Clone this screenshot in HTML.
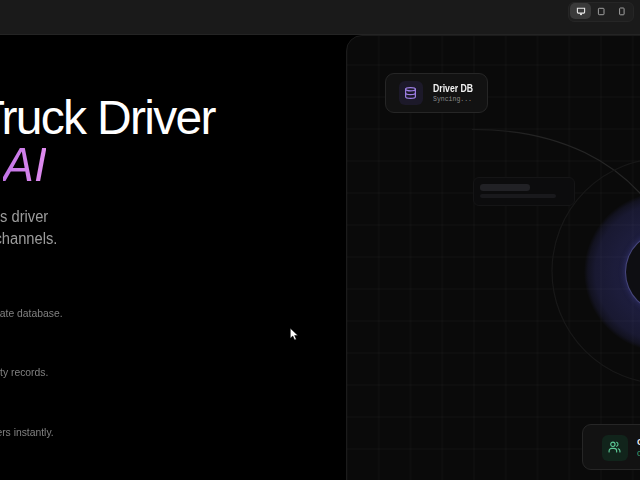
<!DOCTYPE html>
<html><head><meta charset="utf-8">
<style>
*{margin:0;padding:0;box-sizing:border-box}
html,body{width:640px;height:480px;overflow:hidden;background:#000;font-family:"Liberation Sans",sans-serif}
#top{position:absolute;left:0;top:0;width:640px;height:35px;background:#1a1a1a;border-bottom:1px solid #242424}
#seg{position:absolute;left:568px;top:2px;width:66px;height:20px;border-radius:6px;background:#1f1f1f;border:1px solid #262626}
#seg .act{position:absolute;left:1px;top:0px;width:21px;height:16px;border-radius:5px;background:#3a3a3a}
#seg svg{position:absolute}
.h1{position:absolute;color:#fff;font-size:48px;line-height:48px;white-space:nowrap;letter-spacing:-1.7px}
.ai{position:absolute;font-style:italic;font-size:49px;line-height:48px;transform:scaleX(0.945);transform-origin:0 0;background:linear-gradient(90deg,#c274e6,#e08cf0);-webkit-background-clip:text;background-clip:text;color:transparent}
.p{position:absolute;color:#9c9c9c;font-size:16px;line-height:21.5px;white-space:nowrap;transform:scaleX(0.92);transform-origin:0 0}
.li{position:absolute;color:#808080;font-size:11px;line-height:14px;white-space:nowrap;text-align:right;transform:scaleX(0.94);transform-origin:100% 0}
#panel{position:absolute;left:346px;top:35px;width:340px;height:500px;border-radius:16px;background-color:#0a0a0a;border:1px solid #1b1b1b;overflow:hidden}
#grid{position:absolute;left:-1px;top:-36px;width:400px;height:600px;
 background-image:linear-gradient(to right,rgba(255,255,255,0.016) 2px,transparent 2px),linear-gradient(to bottom,rgba(255,255,255,0.016) 2px,transparent 2px);
 background-size:31.75px 32px;background-position:0 0}
.card{position:absolute;background:#121212;border:1px solid #262626;border-radius:9px}
</style></head><body>
<div id="top">
 <div id="seg">
  <div class="act"></div>
  <svg style="left:7px;top:4px" width="10" height="10" viewBox="0 0 10 10"><path d="M1.4 1.3h7.2v3.6a1.2 1.2 0 0 1-1.2 1.2H2.6a1.2 1.2 0 0 1-1.2-1.2Z" fill="none" stroke="#e8e8e8" stroke-width="1.1"/><circle cx="5" cy="7.3" r="1" fill="#f0f0f0"/></svg>
  <svg style="left:28px;top:3px" width="9" height="10" viewBox="0 0 9 10"><rect x="1.4" y="2.3" width="5.6" height="6.4" rx="0.8" fill="none" stroke="#a0a0a0" stroke-width="1"/></svg>
  <svg style="left:49px;top:3px" width="8" height="10" viewBox="0 0 8 10"><rect x="1.6" y="2" width="4.5" height="6.8" rx="0.8" fill="none" stroke="#a0a0a0" stroke-width="1"/></svg>
 </div>
</div>

<div class="h1" style="left:-24.3px;top:93.7px">Truck Driver</div>
<div class="ai" style="left:3.2px;top:139.8px">AI</div>
<div class="p" style="left:-62.6px;top:205.8px">Automates driver</div>
<div class="p" style="left:-52.7px;top:227.5px">across channels.</div>
<div class="li" style="right:577px;top:306px">Store in a private database.</div>
<div class="li" style="right:592px;top:365px">Track safety records.</div>
<div class="li" style="right:586px;top:425px">Match drivers instantly.</div>

<svg style="position:absolute;left:289px;top:327px" width="12" height="15" viewBox="0 0 12 15"><path d="M1.3 1.3 L1.3 11.2 L3.8 9 L5.6 13 L7.3 12.3 L5.6 8.5 L8.9 8.5 Z" fill="#fff" stroke="#000" stroke-width="0.5"/></svg>

<div id="panel">
 <div id="grid"></div>
</div>

<svg style="position:absolute;left:0;top:0" width="640" height="480">
 <defs><linearGradient id="ag" x1="472" y1="0" x2="640" y2="0" gradientUnits="userSpaceOnUse"><stop offset="0" stop-color="#1a1a1a"/><stop offset="0.4" stop-color="#242424"/><stop offset="1" stop-color="#262626"/></linearGradient></defs><path d="M472 129.5 C 560 129, 622 162, 660 218" fill="none" stroke="url(#ag)" stroke-width="1.2"/>
 <circle cx="665" cy="271" r="113" fill="none" stroke="#181818" stroke-width="1.2"/>
</svg>

<div style="position:absolute;left:584px;top:192px;width:160px;height:160px;border-radius:50%;background:radial-gradient(circle closest-side,rgba(78,78,190,0.28) 0%,rgba(78,78,190,0.27) 62%,rgba(74,74,180,0.23) 86%,rgba(68,68,165,0.14) 95%,rgba(60,60,150,0) 100%)"></div>
<div style="position:absolute;left:625px;top:231px;width:82px;height:82px;border-radius:50%;background:#0e0e12;border:1px solid rgba(125,125,225,0.5);box-shadow:0 0 6px rgba(100,100,230,0.3)"></div>
<div class="card" style="position:absolute;left:472.5px;top:177px;width:102px;height:29px;border-radius:6px;background:#0c0c0d;border:1px solid #151516"></div>
<div style="position:absolute;left:480px;top:184px;width:50px;height:6.5px;border-radius:3.2px;background:#212125"></div>
<div style="position:absolute;left:480px;top:194px;width:76px;height:4px;border-radius:2px;background:#19191c"></div>

<div class="card" style="left:385px;top:73px;width:103px;height:40px">
 <div style="position:absolute;left:13px;top:7px;width:24px;height:24px;border-radius:6px;background:#1c1929"></div>
 <svg style="position:absolute;left:17.5px;top:11.5px" width="13" height="14" viewBox="0 0 24 24" fill="none" stroke="#9f80e6" stroke-width="2.2" stroke-linecap="round"><ellipse cx="12" cy="5" rx="9" ry="3"/><path d="M3 5V19A9 3 0 0 0 21 19V5"/><path d="M3 12A9 3 0 0 0 21 12"/></svg>
 <div style="position:absolute;left:47px;top:9px;color:#f2f2f2;font-weight:bold;font-size:10px;white-space:nowrap;transform:scaleX(0.87);transform-origin:0 0">Driver DB</div>
 <div style="position:absolute;left:47px;top:22px;color:#8a8a8a;font-family:'Liberation Mono',monospace;font-size:6.5px;white-space:nowrap">Syncing...</div>
</div>

<div class="card" style="left:582px;top:424px;width:120px;height:46px">
 <div style="position:absolute;left:19px;top:9.5px;width:26px;height:26px;border-radius:6px;background:#11241b"></div>
 <svg style="position:absolute;left:25px;top:15.5px" width="13" height="12" viewBox="0 0 24 22" fill="none" stroke="#5cc997" stroke-width="2.1" stroke-linecap="round"><path d="M2 20v-1.5a5 5 0 0 1 5-5h4a5 5 0 0 1 5 5V20"/><circle cx="9" cy="6" r="4"/><path d="M22 20v-1.5a4.5 4.5 0 0 0-3-4.2"/><path d="M16 2.3a4 4 0 0 1 0 7.4"/></svg>
 <div style="position:absolute;left:54px;top:11.8px;color:#f2f2f2;font-weight:bold;font-size:9px;line-height:10px;white-space:nowrap">Customers</div>
 <div style="position:absolute;left:54px;top:24px;color:#3fae7c;font-family:'Liberation Mono',monospace;font-size:8px;line-height:9px;white-space:nowrap">Online</div>
</div>
</body></html>
